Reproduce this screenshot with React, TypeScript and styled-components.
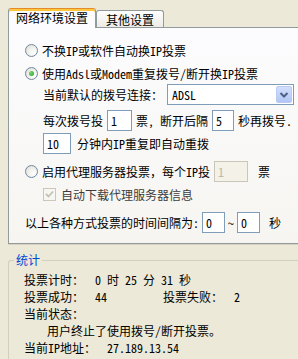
import React from "react";
import styled, { createGlobalStyle, css } from "styled-components";

const GlobalStyle = createGlobalStyle`
  html, body { margin: 0; padding: 0; background: #ECE9D8; overflow: hidden; }
  body {
    font-family: "Noto Sans Mono CJK SC", "Noto Sans CJK SC", sans-serif;
    font-size: 12px;
    color: #000;
  }
  * { box-sizing: border-box; }
`;

const Window = styled.div`
  width: 298px;
  height: 359px;
  padding: 8px 0 0 8px;
  display: flex;
  flex-direction: column;
  overflow: hidden;
`;

const TabStrip = styled.div`
  flex: none;
  display: flex;
  align-items: flex-end;
  height: 19px;
  position: relative;
  z-index: 1;
`;

const Tab = styled.div<{ $active?: boolean }>`
  display: flex;
  align-items: center;
  justify-content: center;
  border: 1px solid #919b9c;
  border-bottom: none;
  border-radius: 3px 3px 0 0;
  line-height: 14px;
  white-space: nowrap;
  ${(p) =>
    p.$active
      ? css`
          width: 88px;
          height: 20px;
          margin-bottom: -1px;
          padding: 2px 0 4px;
          background: #fcfcfe;
          border-top: 1px solid #e68b2c;
          box-shadow: inset 0 2px 0 #ffc73c;
        `
      : css`
          width: 68px;
          height: 17px;
          padding-top: 1px;
          background: linear-gradient(#ffffff, #ecebe6);
        `}
`;

const Panel = styled.div`
  flex: none;
  height: 217px;
  border: 1px solid #919b9c;
  border-right: none;
  background: linear-gradient(180deg, #fcfcfe 0%, #f6f5f1 100%);
  box-shadow: 0 1px 0 #d6d3c4;
  padding: 12px 0 0 16px;
  display: flex;
  flex-direction: column;
`;

const Row = styled.div<{ $mt?: number; $indent?: number; $gap?: number }>`
  flex: none;
  display: flex;
  align-items: center;
  height: 21px;
  gap: ${(p) => p.$gap ?? 4}px;
  white-space: nowrap;
  line-height: 14px;
  margin-top: ${(p) => p.$mt ?? 0}px;
  padding-left: ${(p) => p.$indent ?? 0}px;
`;

const Radio = styled.span<{ $checked?: boolean }>`
  flex: none;
  width: 13px;
  height: 13px;
  border-radius: 50%;
  border: 1px solid #6f88a0;
  background: radial-gradient(circle at 70% 70%, #ffffff 0%, #eeede8 55%, #d9d7cd 100%);
  display: inline-flex;
  align-items: center;
  justify-content: center;
  &::after {
    content: "";
    display: ${(p) => (p.$checked ? "block" : "none")};
    width: 5px;
    height: 5px;
    border-radius: 50%;
    background: radial-gradient(circle at 35% 35%, #7ad27a, #21a121);
  }
`;

const Label = styled.span<{ $muted?: boolean }>`
  color: ${(p) => (p.$muted ? "#3c3c3c" : "#000")};
`;

const Field = styled.input<{ $w: number }>`
  flex: none;
  width: ${(p) => p.$w}px;
  height: 21px;
  margin: 0;
  padding: 0 0 0 3px;
  border: 1px solid #7f9db9;
  background: #ffffff;
  color: #000;
  font: inherit;
  line-height: 14px;
  outline: none;
  &:disabled {
    border-color: #c9c7ba;
    background: #f3f1e8;
    color: #bdb9a6;
  }
`;

const Select = styled.div`
  flex: none;
  width: 127px;
  height: 21px;
  border: 1px solid #7f9db9;
  background: #ffffff;
  display: flex;
  align-items: center;
  justify-content: space-between;
  padding: 0 1px 0 4px;
`;

const DropButton = styled.span`
  width: 16px;
  height: 17px;
  border: 1px solid #b9cbf3;
  border-radius: 2px;
  background: linear-gradient(#d3defc, #b2c6f6);
  display: flex;
  align-items: center;
  justify-content: center;
`;

const Check = styled.span`
  flex: none;
  width: 13px;
  height: 13px;
  border: 1px solid #cac8bb;
  background: #f7f6f1;
  display: inline-flex;
  align-items: center;
  justify-content: center;
`;

const Group = styled.fieldset`
  flex: none;
  height: 130px;
  margin: 9px 0 0 0;
  padding: 4px 0 0 5px;
  min-width: 0;
  border: 1px solid #d0d0bf;
  border-right: none;
  border-radius: 3px 0 0 3px;
`;

const Legend = styled.legend`
  color: #0046d5;
  padding: 0 2px;
  line-height: 14px;
`;

const Stats = styled.div`
  display: flex;
  flex-direction: column;
  padding-left: 10px;
`;

const StatLine = styled.div<{ $indent?: number }>`
  display: flex;
  align-items: center;
  height: 17px;
  line-height: 14px;
  white-space: nowrap;
  padding-left: ${(p) => p.$indent ?? 0}px;
`;

const StatPair = styled.div<{ $w?: number }>`
  display: flex;
  gap: 11px;
  width: ${(p) => (p.$w ? `${p.$w}px` : "auto")};
`;

const TimeParts = styled.div`
  display: flex;
  gap: 6px;
`;

const Chevron = () => (
  <svg width="10" height="8" viewBox="0 0 10 8">
    <polyline points="1.5,2 5,5.5 8.5,2" fill="none" stroke="#4d6185" strokeWidth="2" />
  </svg>
);

const Tick = () => (
  <svg width="9" height="9" viewBox="0 0 9 9">
    <polyline points="1,4 3.5,6.5 8,1.5" fill="none" stroke="#c4c2b4" strokeWidth="1.8" />
  </svg>
);

export default function App() {
  return (
    <>
      <GlobalStyle />
      <Window>
        <TabStrip>
          <Tab $active>网络环境设置</Tab>
          <Tab>其他设置</Tab>
        </TabStrip>
        <Panel>
          <Row>
            <Radio />
            <Label>不换IP或软件自动换IP投票</Label>
          </Row>
          <Row $mt={2}>
            <Radio $checked />
            <Label>使用Adsl或Modem重复拨号/断开换IP投票</Label>
          </Row>
          <Row $indent={18}>
            <Label>当前默认的拨号连接：</Label>
            <Select>
              <span>ADSL</span>
              <DropButton>
                <Chevron />
              </DropButton>
            </Select>
          </Row>
          <Row $mt={5} $indent={18}>
            <Label>每次拨号投</Label>
            <Field $w={25} readOnly value="1" />
            <Label>票, 断开后隔</Label>
            <Field $w={22} readOnly value="5" />
            <Label>秒再拨号.</Label>
          </Row>
          <Row $mt={2} $indent={18} $gap={6}>
            <Field $w={28} readOnly value="10" />
            <Label>分钟内IP重复即自动重拨</Label>
          </Row>
          <Row $mt={7}>
            <Radio />
            <Label>启用代理服务器投票，每个IP投</Label>
            <Field $w={34} disabled value="1" />
            <Label>&nbsp;票</Label>
          </Row>
          <Row $mt={2} $indent={18} $gap={5}>
            <Check>
              <Tick />
            </Check>
            <Label $muted>自动下载代理服务器信息</Label>
          </Row>
          <Row $mt={7} $gap={3}>
            <Label>以上各种方式投票的时间间隔为:</Label>
            <Field $w={23} readOnly value="0" />
            <Label>~</Label>
            <Field $w={23} readOnly value="0" />
            <Label>&nbsp;秒</Label>
          </Row>
        </Panel>
        <Group>
          <Legend>统计</Legend>
          <Stats>
            <StatLine>
              <StatPair>
                <span>投票计时：</span>
                <TimeParts>
                  <span>0</span>
                  <span>时</span>
                  <span>25</span>
                  <span>分</span>
                  <span>31</span>
                  <span>秒</span>
                </TimeParts>
              </StatPair>
            </StatLine>
            <StatLine>
              <StatPair $w={139}>
                <span>投票成功：</span>
                <span>44</span>
              </StatPair>
              <StatPair>
                <span>投票失败：</span>
                <span>2</span>
              </StatPair>
            </StatLine>
            <StatLine>
              <span>当前状态：</span>
            </StatLine>
            <StatLine $indent={23}>
              <span>用户终止了使用拨号/断开投票。</span>
            </StatLine>
            <StatLine>
              <StatPair>
                <span>当前IP地址：</span>
                <span>27.189.13.54</span>
              </StatPair>
            </StatLine>
          </Stats>
        </Group>
      </Window>
    </>
  );
}
